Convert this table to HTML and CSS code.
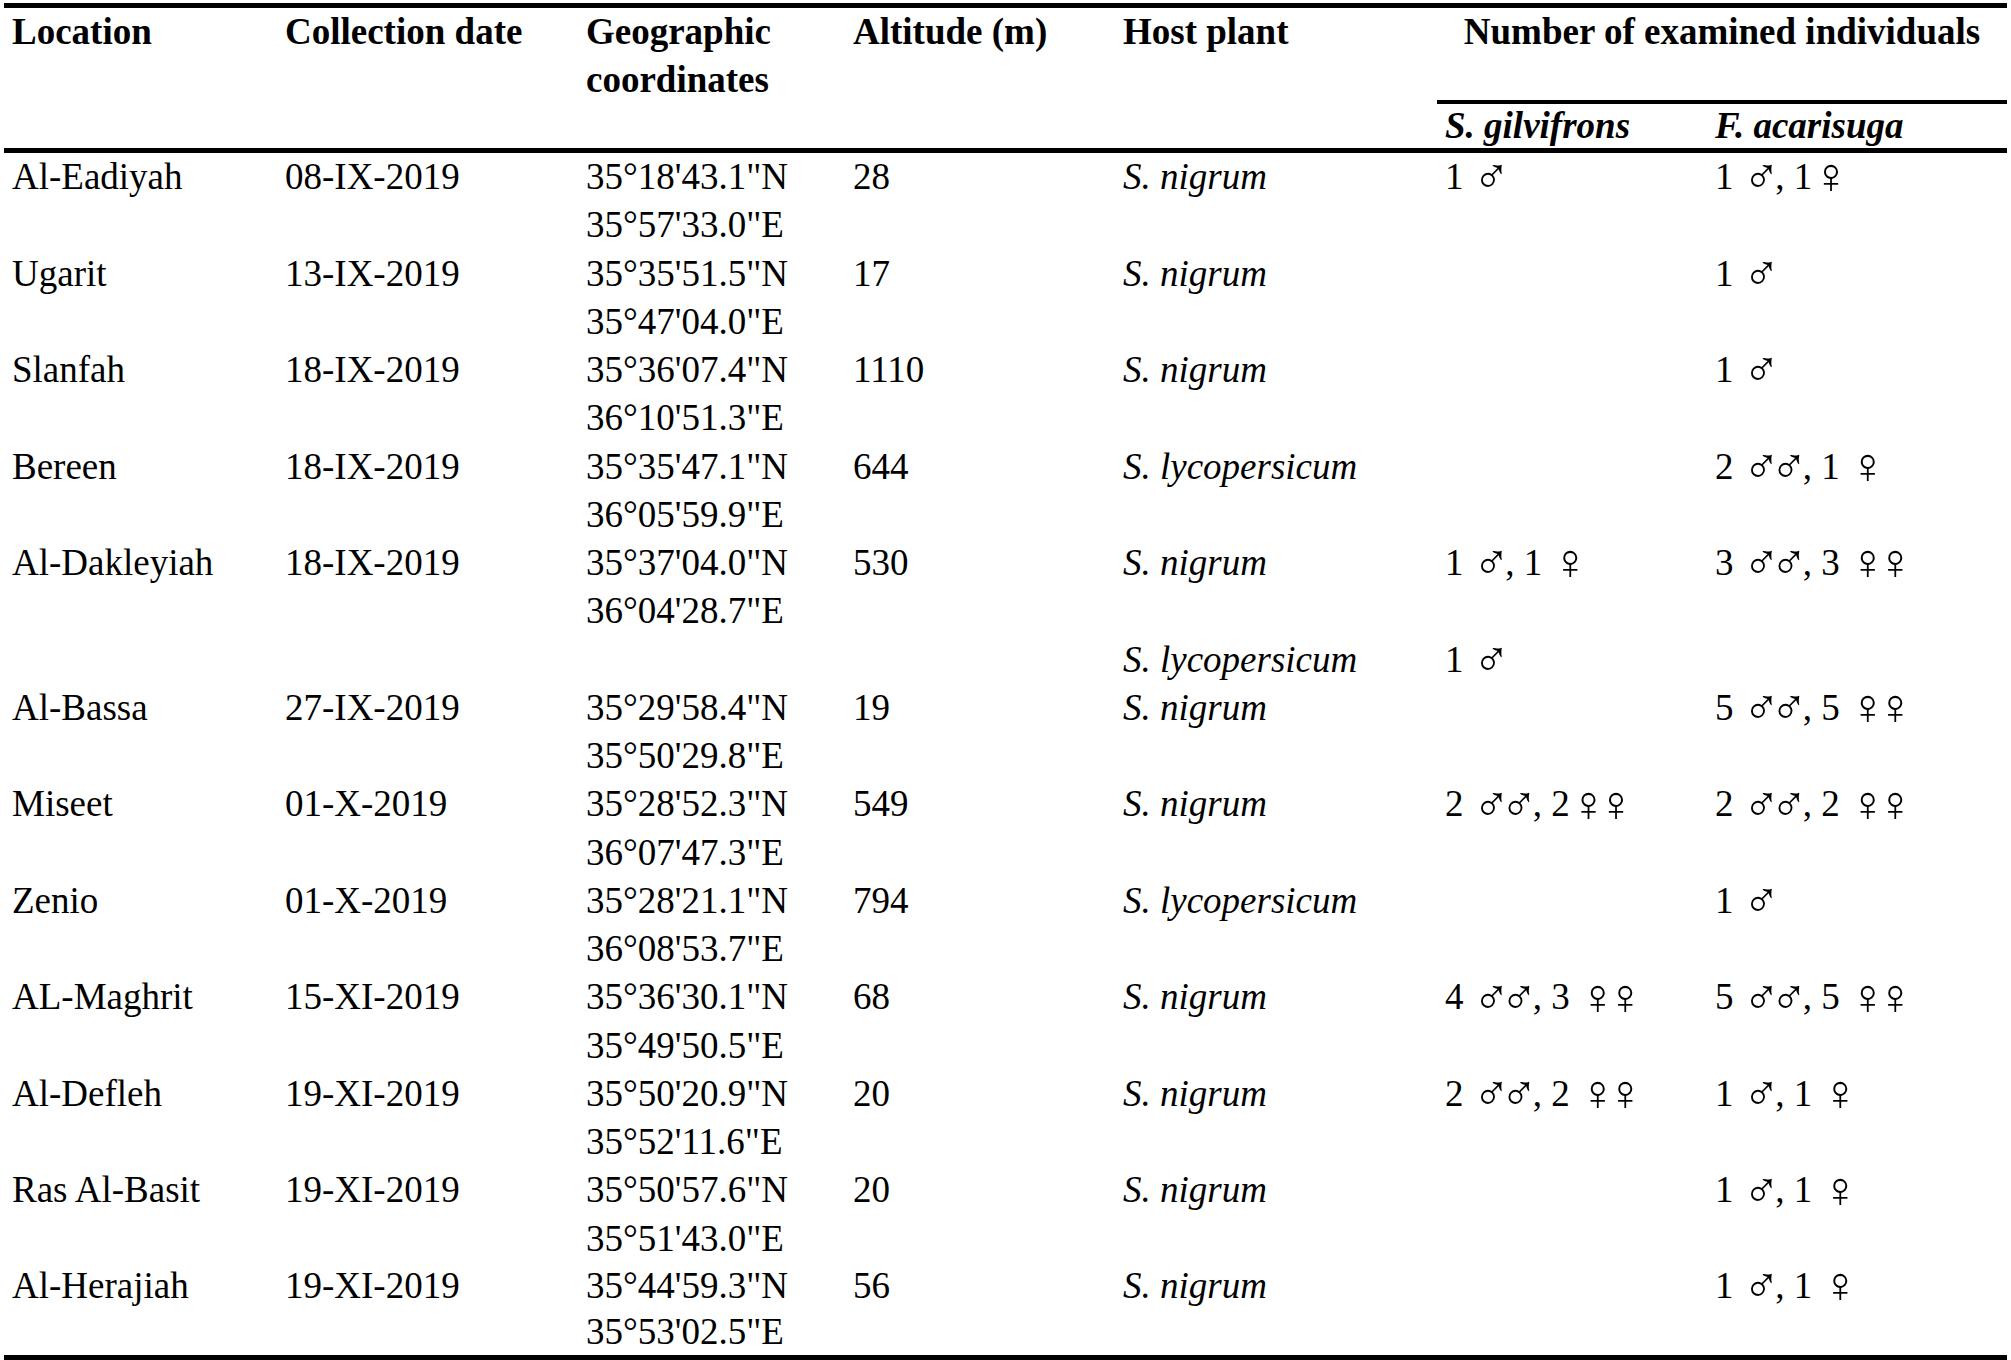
FILE: index.html
```html
<!DOCTYPE html>
<html lang="en">
<head>
<meta charset="utf-8">
<title>Examined individuals</title>
<link rel="stylesheet" href="styles.css">
</head>
<body>
<table class="tbl">
  <colgroup>
    <col class="c-loc"><col class="c-date"><col class="c-geo"><col class="c-alt"><col class="c-host"><col class="c-sg"><col class="c-fa">
  </colgroup>
  <thead>
    <tr class="h1">
      <th rowspan="2" class="hs">Location</th>
      <th rowspan="2" class="hs">Collection date</th>
      <th rowspan="2" class="hs">Geographic coordinates</th>
      <th rowspan="2" class="hs">Altitude (m)</th>
      <th rowspan="2" class="hs">Host plant</th>
      <th colspan="2" class="num">Number of examined individuals</th>
    </tr>
    <tr class="h2">
      <th>S. gilvifrons</th>
      <th>F. acarisuga</th>
    </tr>
  </thead>
  <tbody>
    <tr><td>Al-Eadiyah</td><td>08-IX-2019</td><td>35°18'43.1"N<br>35°57'33.0"E</td><td>28</td><td class="sp">S. nigrum</td><td>1 <span class="sx">♂</span></td><td>1 <span class="sx">♂</span>, 1<span class="sx">♀</span></td></tr>
    <tr><td>Ugarit</td><td>13-IX-2019</td><td>35°35'51.5"N<br>35°47'04.0"E</td><td>17</td><td class="sp">S. nigrum</td><td></td><td>1 <span class="sx">♂</span></td></tr>
    <tr><td>Slanfah</td><td>18-IX-2019</td><td>35°36'07.4"N<br>36°10'51.3"E</td><td>1110</td><td class="sp">S. nigrum</td><td></td><td>1 <span class="sx">♂</span></td></tr>
    <tr><td>Bereen</td><td>18-IX-2019</td><td>35°35'47.1"N<br>36°05'59.9"E</td><td>644</td><td class="sp">S. lycopersicum</td><td></td><td>2 <span class="sx">♂♂</span>, 1 <span class="sx">♀</span></td></tr>
    <tr><td>Al-Dakleyiah</td><td>18-IX-2019</td><td>35°37'04.0"N<br>36°04'28.7"E</td><td>530</td><td class="sp">S. nigrum</td><td>1 <span class="sx">♂</span>, 1 <span class="sx">♀</span></td><td>3 <span class="sx">♂♂</span>, 3 <span class="sx">♀♀</span></td></tr>
    <tr><td></td><td></td><td></td><td></td><td class="sp">S. lycopersicum</td><td>1 <span class="sx">♂</span></td><td></td></tr>
    <tr><td>Al-Bassa</td><td>27-IX-2019</td><td>35°29'58.4"N<br>35°50'29.8"E</td><td>19</td><td class="sp">S. nigrum</td><td></td><td>5 <span class="sx">♂♂</span>, 5 <span class="sx">♀♀</span></td></tr>
    <tr><td>Miseet</td><td>01-X-2019</td><td>35°28'52.3"N<br>36°07'47.3"E</td><td>549</td><td class="sp">S. nigrum</td><td>2 <span class="sx">♂♂</span>, 2<span class="sx">♀♀</span></td><td>2 <span class="sx">♂♂</span>, 2 <span class="sx">♀♀</span></td></tr>
    <tr><td>Zenio</td><td>01-X-2019</td><td>35°28'21.1"N<br>36°08'53.7"E</td><td>794</td><td class="sp">S. lycopersicum</td><td></td><td>1 <span class="sx">♂</span></td></tr>
    <tr><td>AL-Maghrit</td><td>15-XI-2019</td><td>35°36'30.1"N<br>35°49'50.5"E</td><td>68</td><td class="sp">S. nigrum</td><td>4 <span class="sx">♂♂</span>, 3 <span class="sx">♀♀</span></td><td>5 <span class="sx">♂♂</span>, 5 <span class="sx">♀♀</span></td></tr>
    <tr><td>Al-Defleh</td><td>19-XI-2019</td><td>35°50'20.9"N<br>35°52'11.6"E</td><td>20</td><td class="sp">S. nigrum</td><td>2 <span class="sx">♂♂</span>, 2 <span class="sx">♀♀</span></td><td>1 <span class="sx">♂</span>, 1 <span class="sx">♀</span></td></tr>
    <tr><td>Ras Al-Basit</td><td>19-XI-2019</td><td>35°50'57.6"N<br>35°51'43.0"E</td><td>20</td><td class="sp">S. nigrum</td><td></td><td>1 <span class="sx">♂</span>, 1 <span class="sx">♀</span></td></tr>
    <tr class="last"><td>Al-Herajiah</td><td>19-XI-2019</td><td>35°44'59.3"N<br>35°53'02.5"E</td><td>56</td><td class="sp">S. nigrum</td><td></td><td>1 <span class="sx">♂</span>, 1 <span class="sx">♀</span></td></tr>
  </tbody>
</table>
</body>
</html>
```

FILE: styles.css
```css
html, body {
  background: #ffffff;
}

body {
  margin: 3px 0 0 4px;
}

.tbl {
  border-collapse: separate;
  border-spacing: 0;
  table-layout: fixed;
  width: 2003px;
  font-family: "Liberation Serif", "Times New Roman", serif;
  font-size: 37px;
  line-height: 48.25px;
  color: #000000;
}

.c-loc { width: 273px; }
.c-date { width: 301px; }
.c-geo { width: 267px; }
.c-alt { width: 270px; }
.c-host { width: 322px; }
.c-sg { width: 270px; }
.c-fa { width: 300px; }

.tbl th,
.tbl td {
  padding: 0 0 0 8px;
  text-align: left;
  vertical-align: top;
  white-space: nowrap;
  font-weight: normal;
}

.tbl th {
  font-weight: bold;
}

.tbl .h1 th {
  border-top: 5px solid #000000;
}

.tbl th.hs {
  border-bottom: 5px solid #000000;
  white-space: normal;
}

.tbl th.num {
  text-align: center;
  padding: 0 0 43.75px 0;
  border-bottom: 4px solid #000000;
}

.tbl .h2 th {
  line-height: 44px;
  font-style: italic;
  border-bottom: 5px solid #000000;
}

.sp {
  font-style: italic;
}

.sx {
  font-family: "Liberation Serif", serif;
  font-size: 50px;
  line-height: 0;
  letter-spacing: -10px;
  margin-right: 5px;
  vertical-align: -4.4px;
}

.tbl .last td {
  line-height: 45.9px;
  border-bottom: 5px solid #000000;
}
```
